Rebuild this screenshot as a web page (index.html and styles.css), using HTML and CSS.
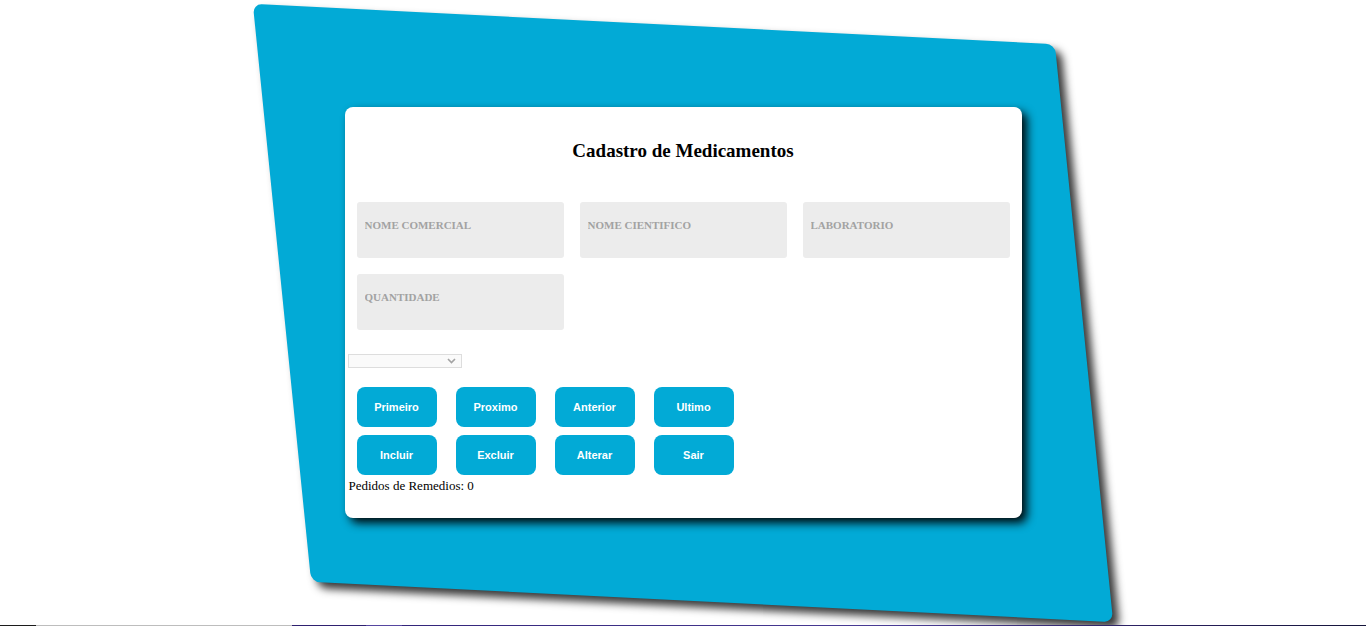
FILE: index.html
```html
<!DOCTYPE html>
<html lang="pt">
<head>
<meta charset="utf-8">
<title>Cadastro de Medicamentos</title>
<link rel="stylesheet" href="styles.css">
</head>
<body>
<main class="stage">
  <div class="backdrop"></div>
  <section class="card">
    <h3 class="title">Cadastro de Medicamentos</h3>
    <div class="fields">
      <input class="field" type="text" placeholder="NOME COMERCIAL">
      <input class="field" type="text" placeholder="NOME CIENTIFICO">
      <input class="field" type="text" placeholder="LABORATORIO">
      <input class="field" type="text" placeholder="QUANTIDADE">
    </div>
    <div class="select-wrap">
      <select class="select"><option></option></select>
      <svg class="chev" width="9" height="6" viewBox="0 0 9 6"><path d="M1 1 L4.5 4.5 L8 1" fill="none" stroke="#a3a3a3" stroke-width="1.6"/></svg>
    </div>
    <div class="buttons">
      <button class="btn">Primeiro</button>
      <button class="btn">Proximo</button>
      <button class="btn">Anterior</button>
      <button class="btn">Ultimo</button>
      <button class="btn">Incluir</button>
      <button class="btn">Excluir</button>
      <button class="btn">Alterar</button>
      <button class="btn">Sair</button>
    </div>
    <p class="count">Pedidos de Remedios: 0</p>
  </section>
</main>
<div class="taskline"></div>
</body>
</html>
```

FILE: styles.css
```css
html, body {
  margin: 0;
  padding: 0;
  background: #ffffff;
}
body {
  font-family: "Liberation Serif", "Times New Roman", serif;
  height: 626px;
  overflow: hidden;
}
.stage {
  height: 625px;
  display: grid;
  place-items: center;
}
.backdrop,
.card {
  grid-area: 1 / 1;
}
.backdrop {
  width: 802px;
  height: 578px;
  background: #02aad6;
  border-radius: 9px;
  transform: skew(5.76deg, 2.87deg);
  box-shadow: 6px 6px 9px rgba(0, 0, 0, 0.78);
}
.card {
  position: relative;
  width: 677px;
  height: 411px;
  box-sizing: border-box;
  background: #ffffff;
  border-radius: 8px;
  padding: 33px 3px 0 3px;
  box-shadow: 5px 5px 10px rgba(0, 0, 0, 0.95);
}
.title {
  margin: 0;
  text-align: center;
  font-size: 19px;
  font-weight: bold;
  line-height: 22px;
  color: #000;
}
.fields {
  margin: 40px 9px 0 9px;
  display: grid;
  grid-template-columns: repeat(3, 207px);
  column-gap: 16px;
  row-gap: 16px;
}
.field {
  height: 56px;
  box-sizing: border-box;
  border: none;
  border-radius: 3px;
  background: #ececec;
  padding: 0 8px 10px 8px;
  margin: 0;
  font-family: "Liberation Serif", "Times New Roman", serif;
  font-weight: bold;
  font-size: 11px;
  color: #555;
  outline: none;
}
.field::placeholder {
  color: #a2a2a2;
  opacity: 1;
}
.select-wrap {
  position: relative;
  width: 114px;
  height: 14px;
  margin-top: 24px;
}
.select {
  appearance: none;
  -webkit-appearance: none;
  display: block;
  width: 114px;
  height: 14px;
  box-sizing: border-box;
  margin: 0;
  padding: 0;
  border: 1px solid #dddddd;
  background: #fafafa;
  font-size: 9px;
}
.chev {
  position: absolute;
  left: 99px;
  top: 4px;
  pointer-events: none;
}
.buttons {
  margin: 19px 0 0 9px;
  display: grid;
  grid-template-columns: repeat(4, 80px);
  column-gap: 19px;
  row-gap: 8px;
}
.btn {
  height: 40px;
  width: 80px;
  border: none;
  border-radius: 8px;
  background: #02aad6;
  color: #ffffff;
  font-family: "Liberation Sans", Arial, sans-serif;
  font-weight: bold;
  font-size: 11px;
  padding: 0;
  margin: 0;
}
.count {
  margin: 3px 0 0 1px;
  font-size: 13px;
  line-height: 15px;
  color: #000;
}
.taskline {
  position: fixed;
  left: 0;
  right: 0;
  bottom: 0;
  height: 1px;
  background: linear-gradient(to right,
    #1c1c1c 0, #1c1c1c 36px,
    #bdbdbd 36px, #bdbdbd 292px,
    #2f2170 292px, #2f2170 366px,
    #5646a0 366px, #5646a0 402px,
    #33257a 402px, #4a3c95 900px,
    #2a2060 1150px, #15153a 1366px);
}
```
